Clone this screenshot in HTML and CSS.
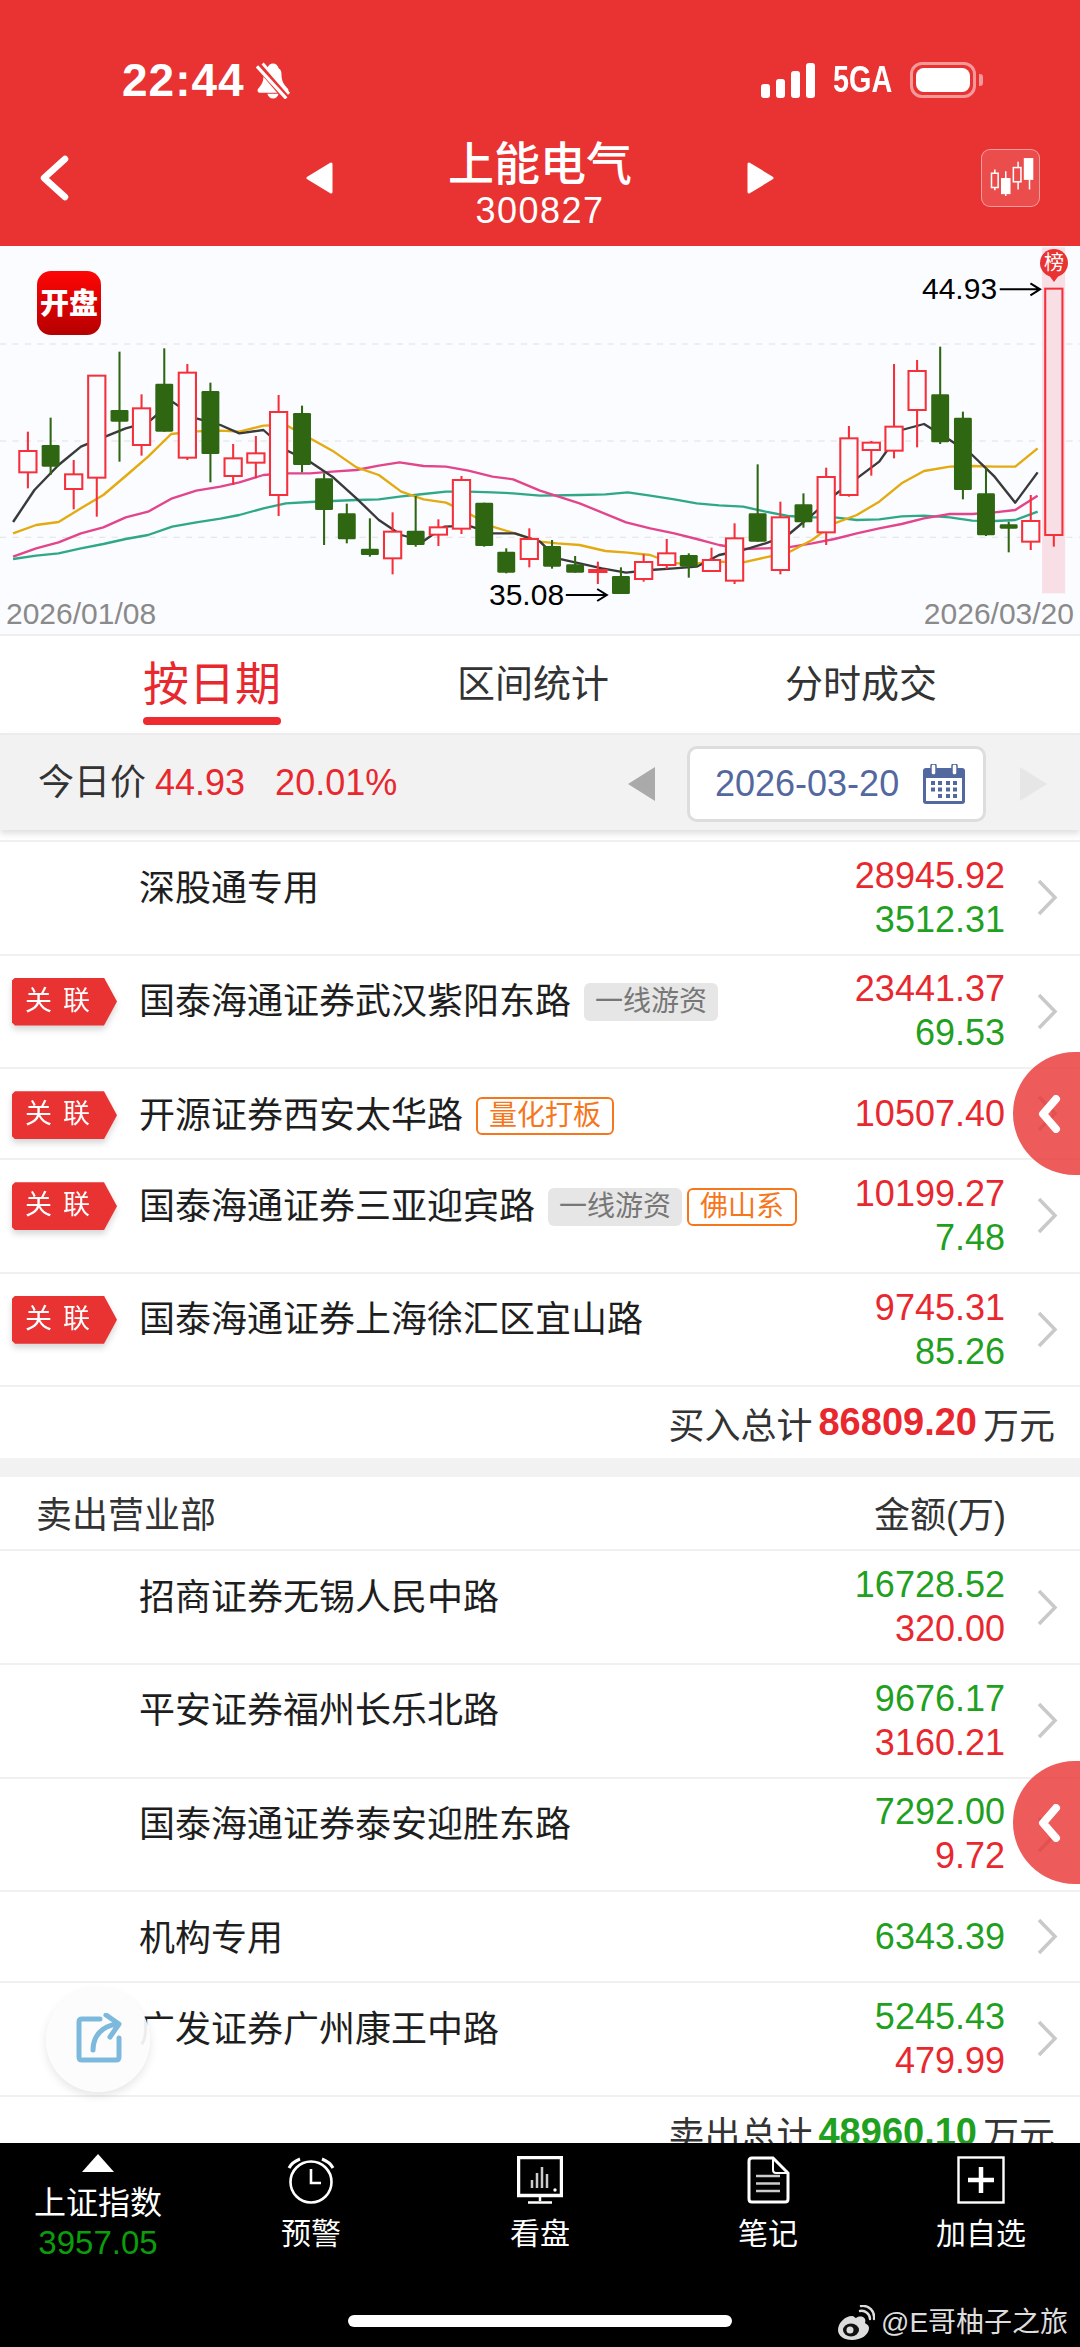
FILE: index.html
```html
<!DOCTYPE html>
<html lang="zh-CN">
<head>
<meta charset="utf-8">
<title>上能电气</title>
<link rel="stylesheet" href="styles.css">
</head>
<body>
<div class="page">
  <header class="header">
    <div class="status">
      <span class="time">22:44</span>
      <svg class="bell" viewBox="0 0 36 38"><path d="M18 1c3 0 5 2 6 5 2 1 3 3 3 7 0 7 3 11 7 15 1 2 0 4-2 4H4c-2 0-3-2-2-4 4-4 6-8 6-15 0-4 2-6 4-7 1-3 3-5 6-5z" fill="#fff"/><path d="M12 33h12c-1 3-3 5-6 5s-5-2-6-5z" fill="#fff"/><path d="M2 2l30 35" stroke="#e93232" stroke-width="8"/><path d="M1 4l31 34" stroke="#fff" stroke-width="3.4"/><path d="M7 1l28 32" stroke="#fff" stroke-width="3"/></svg>
      <span class="status-right">
        <span class="signal"><i class="s1"></i><i class="s2"></i><i class="s3"></i><i class="s4"></i></span>
        <span class="net">5GA</span>
        <span class="battery"><i></i></span>
        <span class="battery-tip"></span>
      </span>
    </div>
    <div class="titlebar">
      <svg class="back" viewBox="0 0 30 46"><path d="M26 4L5 23l21 19" fill="none" stroke="#fff" stroke-width="6.5" stroke-linecap="round" stroke-linejoin="round"/></svg>
      <svg class="tri" viewBox="0 0 28 32"><path d="M26 2v28L3 16z" fill="#fff" stroke="#fff" stroke-width="3" stroke-linejoin="round"/></svg>
      <div class="title-col">
        <div class="title">上能电气</div>
        <div class="code">300827</div>
      </div>
      <svg class="tri" viewBox="0 0 28 32"><path d="M2 2v28l23-14z" fill="#fff" stroke="#fff" stroke-width="3" stroke-linejoin="round"/></svg>
      <div class="kbtn">
        <svg viewBox="0 0 60 60" width="58" height="58"><g fill="none" stroke="#fff" stroke-width="1.6"><rect x="10" y="25" width="7" height="15"/><path d="M13.500 21v4M13.500 40v3M25 23v7M25 46v3M38 13v6M38 34v8M50 32v10"/><rect x="33" y="19" width="8" height="15"/></g><rect x="20" y="30" width="10" height="17" fill="#fff"/><rect x="44" y="9" width="10" height="23" fill="#fff"/></svg>
      </div>
    </div>
  </header>

  <section class="chart">
    <svg class="kline" viewBox="0 18 3136 1167" preserveAspectRatio="none">
      <g class="grid"><line x1="0" x2="3136" y1="312" y2="312"/><line x1="0" x2="3136" y1="603" y2="603"/><line x1="0" x2="3136" y1="892" y2="892"/></g>
      <rect class="band" x="3026" y="22" width="67" height="1038"/>
      <g class="ma">
        <polyline class="ma-teal" points="38,957 105,947 170,940 235,925 300,912 365,897 430,885 500,860 570,847 640,836 695,825 765,805 830,790 900,786 965,783 1035,780 1100,778 1160,770 1230,762 1295,755 1360,755 1430,757 1490,760 1568,767 1683,765 1758,763 1823,757 1888,767 1958,778 2023,790 2088,796 2158,800 2223,815 2288,828 2358,832 2423,832 2488,840 2553,838 2618,829 2683,827 2758,832 2823,842 2888,843 2948,840 3013,815"/>
        <polyline class="ma-pink" points="38,950 105,925 170,907 235,880 300,862 365,832 430,815 500,775 570,752 640,740 695,727 765,705 830,700 900,700 965,695 1035,690 1100,677 1160,667 1230,678 1295,680 1360,692 1430,710 1490,718 1568,752 1683,790 1818,847 1888,865 1958,880 2023,897 2088,915 2158,927 2223,925 2288,922 2358,910 2423,897 2488,880 2553,865 2618,852 2683,835 2758,822 2823,822 2888,817 2948,810 3013,767"/>
        <polyline class="ma-gold" points="38,880 105,855 170,846 235,805 300,765 365,708 430,650 497,582 570,574 640,572 695,575 765,557 830,555 900,595 965,632 1035,682 1100,705 1165,755 1230,778 1295,788 1360,820 1430,860 1495,880 1568,905 1618,910 1683,915 1758,933 1823,938 1888,945 1953,970 2023,970 2088,965 2158,967 2223,952 2288,938 2358,900 2423,850 2488,825 2553,785 2618,730 2683,693 2758,680 2823,678 2888,680 2948,680 3013,625"/>
        <polyline class="ma-black" points="38,846 100,750 170,675 235,620 300,592 365,565 430,547 500,485 570,535 640,555 695,580 765,570 830,630 900,665 965,710 1035,775 1100,840 1165,885 1230,903 1290,860 1360,857 1430,880 1495,880 1568,905 1618,955 1683,970 1748,985 1818,998 1888,990 1958,985 2023,980 2088,945 2158,930 2223,910 2288,885 2358,825 2423,765 2488,715 2553,665 2618,570 2683,552 2758,600 2823,645 2888,710 2948,788 3013,697"/>
      </g>
      <g class="up">
        <line x1="81" x2="81" y1="575" y2="745"/><rect x="56" y="633" width="50" height="64"/>
        <line x1="214" x2="214" y1="660" y2="808"/><rect x="189" y="703" width="50" height="44"/>
        <line x1="281" x2="281" y1="407" y2="830"/><rect x="256" y="407" width="50" height="306"/>
        <line x1="411" x2="411" y1="463" y2="647"/><rect x="386" y="505" width="50" height="110"/>
        <line x1="544" x2="544" y1="372" y2="660"/><rect x="519" y="398" width="50" height="255"/>
        <line x1="677" x2="677" y1="612" y2="735"/><rect x="652" y="655" width="50" height="53"/>
        <line x1="743" x2="743" y1="588" y2="715"/><rect x="718" y="640" width="50" height="28"/>
        <line x1="809" x2="809" y1="465" y2="828"/><rect x="784" y="516" width="50" height="249"/>
        <line x1="1140" x2="1140" y1="817" y2="1003"/><rect x="1115" y="875" width="50" height="80"/>
        <line x1="1273" x2="1273" y1="838" y2="918"/><rect x="1248" y="862" width="50" height="22"/>
        <line x1="1340" x2="1340" y1="708" y2="882"/><rect x="1315" y="720" width="50" height="146"/>
        <line x1="1537" x2="1537" y1="865" y2="982"/><rect x="1512" y="897" width="50" height="60"/>
        <line x1="1736" x2="1736" y1="965" y2="1032"/><rect class="flat" x="1711" y="990" width="50" height="6"/>
        <line x1="1869" x2="1869" y1="943" y2="1025"/><rect x="1844" y="966" width="50" height="51"/>
        <line x1="1936" x2="1936" y1="897" y2="987"/><rect x="1911" y="940" width="50" height="35"/>
        <line x1="2066" x2="2066" y1="923" y2="993"/><rect x="2041" y="960" width="50" height="33"/>
        <line x1="2133" x2="2133" y1="850" y2="1032"/><rect x="2108" y="895" width="50" height="127"/>
        <line x1="2266" x2="2266" y1="785" y2="1003"/><rect x="2241" y="832" width="50" height="158"/>
        <line x1="2399" x2="2399" y1="683" y2="915"/><rect x="2374" y="711" width="50" height="166"/>
        <line x1="2465" x2="2465" y1="558" y2="770"/><rect x="2440" y="595" width="50" height="170"/>
        <line x1="2530" x2="2530" y1="603" y2="707"/><rect x="2505" y="608" width="50" height="22"/>
        <line x1="2596" x2="2596" y1="372" y2="655"/><rect x="2571" y="560" width="50" height="72"/>
        <line x1="2663" x2="2663" y1="360" y2="622"/><rect x="2638" y="393" width="50" height="117"/>
        <line x1="2993" x2="2993" y1="765" y2="930"/><rect x="2968" y="843" width="50" height="62"/>
        <line x1="3060" x2="3060" y1="885" y2="920"/><rect class="limit" x="3035" y="146" width="50" height="739"/>
      </g>
      <g class="down">
        <line x1="147" x2="147" y1="533" y2="705"/><rect x="121" y="615" width="52" height="65"/>
        <line x1="347" x2="347" y1="335" y2="665"/><rect x="321" y="510" width="52" height="35"/>
        <line x1="477" x2="477" y1="325" y2="575"/><rect x="451" y="431" width="52" height="144"/>
        <line x1="611" x2="611" y1="428" y2="727"/><rect x="585" y="453" width="52" height="189"/>
        <line x1="877" x2="877" y1="497" y2="697"/><rect x="851" y="519" width="52" height="156"/>
        <line x1="941" x2="941" y1="700" y2="915"/><rect x="915" y="715" width="52" height="95"/>
        <line x1="1007" x2="1007" y1="791" y2="910"/><rect x="981" y="820" width="52" height="78"/>
        <line x1="1074" x2="1074" y1="835" y2="950"/><rect x="1048" y="926" width="52" height="19"/>
        <line x1="1207" x2="1207" y1="768" y2="920"/><rect x="1181" y="872" width="52" height="43"/>
        <line x1="1406" x2="1406" y1="788" y2="920"/><rect x="1380" y="788" width="52" height="130"/>
        <line x1="1470" x2="1470" y1="925" y2="1000"/><rect x="1444" y="935" width="52" height="63"/>
        <line x1="1603" x2="1603" y1="900" y2="986"/><rect x="1577" y="918" width="52" height="62"/>
        <line x1="1670" x2="1670" y1="948" y2="998"/><rect x="1644" y="973" width="52" height="25"/>
        <line x1="1803" x2="1803" y1="982" y2="1062"/><rect x="1777" y="1008" width="52" height="54"/>
        <line x1="2000" x2="2000" y1="940" y2="1013"/><rect x="1974" y="945" width="52" height="35"/>
        <line x1="2200" x2="2200" y1="673" y2="905"/><rect x="2174" y="820" width="52" height="85"/>
        <line x1="2333" x2="2333" y1="760" y2="863"/><rect x="2307" y="793" width="52" height="54"/>
        <line x1="2730" x2="2730" y1="320" y2="612"/><rect x="2704" y="463" width="52" height="144"/>
        <line x1="2796" x2="2796" y1="515" y2="778"/><rect x="2770" y="533" width="52" height="217"/>
        <line x1="2863" x2="2863" y1="685" y2="888"/><rect x="2837" y="760" width="52" height="126"/>
        <line x1="2929" x2="2929" y1="845" y2="937"/><rect x="2903" y="853" width="52" height="13"/>
      </g>
      <g class="arrow">
        <path d="M2903 148H3018M2992 130L3020 148L2992 166"/>
        <path d="M1643 1065H1760M1734 1047L1762 1065L1734 1083"/>
      </g>
    </svg>
    <div class="logo">开盘</div>
    <div class="pin">榜</div>
    <span class="price-label high">44.93</span>
    <span class="price-label low">35.08</span>
    <span class="axis-date start">2026/01/08</span>
    <span class="axis-date end">2026/03/20</span>
  </section>

  <nav class="tabs">
    <div class="tab active">按日期</div>
    <div class="tab">区间统计</div>
    <div class="tab">分时成交</div>
  </nav>

  <div class="datebar">
    <span class="today">今日价</span>
    <span class="red today-price">44.93</span>
    <span class="red today-pct">20.01%</span>
    <span class="arrow-l"></span>
    <div class="datebox">
      <span>2026-03-20</span>
      <svg class="cal" viewBox="0 0 42 40"><rect x="0" y="4" width="42" height="36" rx="3" fill="#5468a0"/><rect x="3" y="14" width="36" height="23" fill="#fff"/><g fill="#fff"><rect x="8" y="0" width="5" height="11" rx="2" stroke="#5468a0" stroke-width="1.500"/><rect x="29" y="0" width="5" height="11" rx="2" stroke="#5468a0" stroke-width="1.500"/></g><g fill="#5468a0"><rect x="8" y="17" width="4" height="4"/><rect x="15" y="17" width="4" height="4"/><rect x="23" y="17" width="4" height="4"/><rect x="30" y="17" width="4" height="4"/><rect x="8" y="23.500" width="4" height="4"/><rect x="15" y="23.500" width="4" height="4"/><rect x="23" y="23.500" width="4" height="4"/><rect x="30" y="23.500" width="4" height="4"/><rect x="15" y="30" width="4" height="4"/><rect x="23" y="30" width="4" height="4"/><rect x="30" y="30" width="4" height="4"/></g></svg>
    </div>
    <span class="arrow-r"></span>
  </div>

  <main class="list">
    <div class="row">
      <div class="slot"></div>
      <div class="name">深股通专用</div>
      <div class="vals"><span class="red">28945.92</span><span class="green">3512.31</span></div>
      <svg class="chev" viewBox="0 0 22 37"><path d="M3 2l16 16.500L3 35"/></svg>
    </div>
    <div class="row">
      <div class="slot"><span class="rel">关联</span></div>
      <div class="name">国泰海通证券武汉紫阳东路<span class="tag gray">一线游资</span></div>
      <div class="vals"><span class="red">23441.37</span><span class="green">69.53</span></div>
      <svg class="chev" viewBox="0 0 22 37"><path d="M3 2l16 16.500L3 35"/></svg>
    </div>
    <div class="row">
      <div class="slot"><span class="rel">关联</span></div>
      <div class="name">开源证券西安太华路<span class="tag orange">量化打板</span></div>
      <div class="vals"><span class="red">10507.40</span></div>
      <svg class="chev" viewBox="0 0 22 37"><path d="M3 2l16 16.500L3 35"/></svg>
    </div>
    <div class="row">
      <div class="slot"><span class="rel">关联</span></div>
      <div class="name">国泰海通证券三亚迎宾路<span class="tag gray">一线游资</span><span class="tag orange">佛山系</span></div>
      <div class="vals"><span class="red">10199.27</span><span class="green">7.48</span></div>
      <svg class="chev" viewBox="0 0 22 37"><path d="M3 2l16 16.500L3 35"/></svg>
    </div>
    <div class="row">
      <div class="slot"><span class="rel">关联</span></div>
      <div class="name">国泰海通证券上海徐汇区宜山路</div>
      <div class="vals"><span class="red">9745.31</span><span class="green">85.26</span></div>
      <svg class="chev" viewBox="0 0 22 37"><path d="M3 2l16 16.500L3 35"/></svg>
    </div>
    <div class="total"><span>买入总计</span><b class="red">86809.20</b><span>万元</span></div>
    <div class="sep"></div>
    <div class="head"><span>卖出营业部</span><span>金额(万)</span></div>
    <div class="row">
      <div class="slot"></div>
      <div class="name">招商证券无锡人民中路</div>
      <div class="vals"><span class="green">16728.52</span><span class="red">320.00</span></div>
      <svg class="chev" viewBox="0 0 22 37"><path d="M3 2l16 16.500L3 35"/></svg>
    </div>
    <div class="row">
      <div class="slot"></div>
      <div class="name">平安证券福州长乐北路</div>
      <div class="vals"><span class="green">9676.17</span><span class="red">3160.21</span></div>
      <svg class="chev" viewBox="0 0 22 37"><path d="M3 2l16 16.500L3 35"/></svg>
    </div>
    <div class="row">
      <div class="slot"></div>
      <div class="name">国泰海通证券泰安迎胜东路</div>
      <div class="vals"><span class="green">7292.00</span><span class="red">9.72</span></div>
      <svg class="chev" viewBox="0 0 22 37"><path d="M3 2l16 16.500L3 35"/></svg>
    </div>
    <div class="row">
      <div class="slot"></div>
      <div class="name">机构专用</div>
      <div class="vals"><span class="green">6343.39</span></div>
      <svg class="chev" viewBox="0 0 22 37"><path d="M3 2l16 16.500L3 35"/></svg>
    </div>
    <div class="row">
      <div class="slot"></div>
      <div class="name">广发证券广州康王中路</div>
      <div class="vals"><span class="green">5245.43</span><span class="red">479.99</span></div>
      <svg class="chev" viewBox="0 0 22 37"><path d="M3 2l16 16.500L3 35"/></svg>
    </div>
    <div class="total"><span>卖出总计</span><b class="green">48960.10</b><span>万元</span></div>
  </main>

  <footer class="bottom">
    <div class="index">
      <svg class="up-tri" viewBox="0 0 32 18"><path d="M16 0l16 18H0z" fill="#fff"/></svg>
      <div class="index-name">上证指数</div>
      <div class="index-val">3957.05</div>
    </div>
    <div class="item">
      <svg viewBox="0 0 50 48" width="50" height="48"><circle cx="25" cy="26" r="20.500" fill="none" stroke="#fff" stroke-width="2.600"/><path d="M25 13v14h10" fill="none" stroke="#fff" stroke-width="2.600"/><path d="M3 12c2-4 6-7 11-9M47 12c-2-4-6-7-11-9" fill="none" stroke="#fff" stroke-width="3"/></svg>
      <span>预警</span>
    </div>
    <div class="item">
      <svg viewBox="0 0 46 48" width="46" height="48"><rect x="1.500" y="1.500" width="43" height="38" fill="none" stroke="#fff" stroke-width="3.500"/><path d="M15 32V24M20 32V17M25 32V11M30 32V18" stroke="#ccc" stroke-width="2.500"/><circle cx="38" cy="34" r="1.700" fill="#fff"/><path d="M23 40v5M11 46.500h24" stroke="#fff" stroke-width="2.500"/></svg>
      <span>看盘</span>
    </div>
    <div class="item">
      <svg viewBox="0 0 44 48" width="44" height="48"><path d="M6 2h21l15 15v26c0 2-1 3-3 3H6c-2 0-3-1-3-3V5c0-2 1-3 3-3z" fill="none" stroke="#fff" stroke-width="3"/><path d="M27 3v11c0 2 1 3 3 3h11" fill="none" stroke="#fff" stroke-width="2"/><path d="M10 20h24M10 27.500h24M10 35h24" stroke="#ccc" stroke-width="2.500"/></svg>
      <span>笔记</span>
    </div>
    <div class="item">
      <svg viewBox="0 0 48 48" width="48" height="48"><rect x="1.500" y="1.500" width="45" height="45" fill="none" stroke="#fff" stroke-width="2.400"/><path d="M24 11v26M11 24h26" stroke="#fff" stroke-width="4.500"/></svg>
      <span>加自选</span>
    </div>
    <div class="home"></div>
    <div class="mark">
      <svg viewBox="0 0 38 36" width="38" height="36"><path d="M15 11C8 11 1 18 1 25c0 6 6 10 14 10 9 0 17-5 17-12 0-3-3-4-4-5 1-3 0-5-2-6-3-1-6 0-7 1-1 0-2-2-4-2z" fill="#ddd"/><ellipse cx="14" cy="25" rx="8" ry="6.500" fill="#111"/><circle cx="13" cy="25" r="3.500" fill="#ddd"/><path d="M23 6c5-1 10 3 10 8M24 1c8-1 14 5 13 13" fill="none" stroke="#ddd" stroke-width="2.400" stroke-linecap="round"/></svg>
      <span>@E哥柚子之旅</span>
    </div>
  </footer>

  <div class="fold fold-a"><svg viewBox="0 0 24 38" width="24" height="38"><path d="M19 4L6 19l13 15" fill="none" stroke="#fff" stroke-width="8" stroke-linecap="round" stroke-linejoin="round"/></svg></div>
  <div class="fold fold-b"><svg viewBox="0 0 24 38" width="24" height="38"><path d="M19 4L6 19l13 15" fill="none" stroke="#fff" stroke-width="8" stroke-linecap="round" stroke-linejoin="round"/></svg></div>
  <div class="share"><svg viewBox="0 0 48 50" width="48" height="50"><path d="M24 6H6c-2 0-3 1-3 3v35c0 2 1 3 3 3h34c2 0 3-1 3-3V25" fill="none" stroke="#7cb9dd" stroke-width="5" stroke-linecap="round"/><path d="M17 37c0-14 9-24 24-26M30 2l13 9-9 13" fill="none" stroke="#7cb9dd" stroke-width="5" stroke-linecap="round" stroke-linejoin="round"/></svg></div>
</div>
</body>
</html>
```
FILE: styles.css
```css
* { box-sizing: border-box; }
html, body { margin: 0; padding: 0; }
body { background: #fff; font-family: "Liberation Sans", "Noto Sans CJK SC", sans-serif; color: #2a2a2a; }
.page { position: relative; width: 1080px; height: 2347px; overflow: hidden; display: flex; flex-direction: column; }
.red { color: #e8282e; }
.green { color: #1fa01f; }

/* header */
.header { height: 246px; flex: none; background: #e93232; color: #fff; padding-top: 62px; }
.status { display: flex; align-items: center; height: 36px; padding-left: 122px; padding-right: 97px; }
.time { font-size: 46px; font-weight: 700; line-height: 36px; letter-spacing: 1px; }
.bell { width: 34px; height: 37px; margin-left: 11px; }
.status-right { margin-left: auto; display: flex; align-items: center; height: 36px; }
.signal { display: flex; align-items: flex-end; gap: 6px; height: 35px; }
.signal i { display: block; width: 9px; background: #fff; border-radius: 3px; }
.s1 { height: 14px; }
.s2 { height: 19px; }
.s3 { height: 27px; }
.s4 { height: 35px; }
.net { font-size: 36px; font-weight: 700; line-height: 36px; width: 59px; margin-left: 18px; transform: scaleX(.8); transform-origin: left center; white-space: nowrap; }
.battery { width: 66px; height: 36px; margin-left: 18px; border: 3px solid rgba(255,255,255,.5); border-radius: 12px; padding: 3px; }
.battery i { display: block; height: 100%; background: #fff; border-radius: 8px; }
.battery-tip { width: 4px; height: 12px; margin-left: 3px; background: rgba(255,255,255,.5); border-radius: 0 3px 3px 0; }
.titlebar { display: flex; align-items: center; height: 80px; margin-top: 40px; padding-right: 40px; }
.back { width: 30px; height: 46px; margin-left: 39px; flex: none; }
.tri { width: 28px; height: 32px; flex: none; }
.back + .tri { margin-left: 236px; }
.title-col { flex: 1; align-self: flex-start; padding-top: 1px; text-align: center; }
.title { font-size: 46px; line-height: 50px; font-weight: 500; }
.code { font-size: 36px; line-height: 44px; letter-spacing: 1.500px; }
.kbtn { width: 59px; height: 58px; flex: none; margin-left: 206px; background: rgba(255,255,255,.13); border: 1.500px solid rgba(255,255,255,.45); border-radius: 9px; display: flex; align-items: center; justify-content: center; }

/* chart */
.chart { position: relative; height: 390px; flex: none; background: #fbfcff; border-bottom: 2px solid #eeeeee; }
.kline { display: block; width: 1080px; height: 389px; }
.grid line { stroke: #dfdfdf; stroke-width: 3; stroke-dasharray: 18 18; }
.band { fill: #f8dfe5; }
.ma polyline { fill: none; stroke-width: 7; stroke-linejoin: round; }
.ma-black { stroke: #3a3a3a; }
.ma-gold { stroke: #e3ab10; }
.ma-pink { stroke: #e2458c; }
.ma-teal { stroke: #2fa888; }
.up line, .up rect { stroke: #f5303a; stroke-width: 6; }
.up rect { fill: #fbfcff; }
.up rect.flat { fill: #f5303a; }
.up rect.limit { fill: #f8dfe5; }
.down line { stroke: #2f6611; stroke-width: 6; }
.down rect { fill: #2f6611; rx: 4px; }
.arrow path { fill: none; stroke: #000; stroke-width: 6; }
.logo { position: absolute; left: 37px; top: 25px; width: 64px; height: 64px; border-radius: 14px; background: linear-gradient(#ff0606, #b50000); color: #fff; font-size: 29px; line-height: 66px; font-weight: 900; text-align: center; white-space: nowrap; }
.pin { position: absolute; left: 1040px; top: 3px; width: 28px; height: 28px; border-radius: 50%; background: #e93232; color: #fff; font-size: 20px; line-height: 28px; text-align: center; }
.pin::after { content: ""; position: absolute; left: 8px; top: 25px; border: 6px solid transparent; border-top: 8px solid #e93232; border-bottom: 0; }
.price-label { position: absolute; font-size: 30px; line-height: 36px; color: #000; }
.price-label.high { left: 922px; top: 25px; }
.price-label.low { left: 489px; top: 331px; }
.axis-date { position: absolute; top: 350px; font-size: 30px; line-height: 36px; color: #8a8a8a; }
.axis-date.start { left: 6px; }
.axis-date.end { right: 6px; }

/* tabs */
.tabs { height: 97px; flex: none; display: flex; gap: 176px; padding-left: 143px; background: #fff; }
.tab { padding-top: 16px; font-size: 38px; line-height: 64px; color: #333; }
.tab.active { font-size: 46px; color: #e8282e; }
.tab.active::after { content: ""; display: block; height: 8px; margin-top: 1px; border-radius: 4px; background: #ee2b2f; }

/* date bar */
.datebar { position: relative; z-index: 1; height: 97px; flex: none; display: flex; align-items: center; padding: 3px 33px 0 38px; background: #f2f2f2; border-top: 2px solid #ececec; box-shadow: 0 4px 6px rgba(0,0,0,.12); font-size: 36px; line-height: 44px; }
.today { color: #333; margin-bottom: 3px; }
.today-price { margin-left: 9px; margin-bottom: 2px; }
.today-pct { margin-left: 30px; margin-bottom: 2px; }
.arrow-l { margin-left: auto; width: 0; height: 0; border: 17px solid transparent; border-left: 0; border-right: 27px solid #aaaaaa; }
.arrow-r { width: 0; height: 0; border: 17px solid transparent; border-right: 0; border-left: 27px solid #e6e6e6; margin-left: 34px; }
.datebox { width: 299px; height: 76px; margin-left: 32px; padding: 0 18px 0 25px; display: flex; align-items: center; justify-content: space-between; background: #fff; border: 3px solid #dddddd; border-radius: 10px; color: #5468a0; }
.cal { width: 42px; height: 40px; }

/* list */
.list { flex: 1; min-height: 0; overflow: hidden; margin-top: 10px; background: #fff; }
.row { display: flex; align-items: stretch; min-height: 91px; padding-right: 22px; border-top: 2px solid #f0f0f0; }
.slot { width: 139px; flex: none; padding: 22px 0 0 12px; filter: drop-shadow(0 4px 3px rgba(0,0,0,.16)); }
.rel { display: block; width: 105px; height: 48px; padding-left: 13px; background: #e93232; color: #fff; font-size: 27px; line-height: 47px; letter-spacing: 11px; white-space: nowrap; clip-path: polygon(3px 0, 92px 0, 105px 24px, 92px 48px, 3px 48px, 0 45px, 0 3px); }
.name { flex: 1; display: flex; align-items: center; height: 89px; padding-top: 4px; font-size: 36px; line-height: 40px; color: #1e1e1e; white-space: nowrap; }
.tag { display: block; height: 38px; margin-left: 13px; padding: 0 11px; border-radius: 6px; font-size: 28px; line-height: 38px; }
.tag + .tag { margin-left: 5px; }
.tag.gray { background: #e6e6e6; color: #777; }
.tag.orange { border: 2px solid #f6761c; color: #f6761c; line-height: 34px; }
.vals { display: flex; flex-direction: column; justify-content: center; align-items: flex-end; padding: 11.800px 0; font-size: 36px; line-height: 44px; }
.chev { width: 22px; height: 37px; margin-left: 31px; flex: none; align-self: center; }
.chev path { fill: none; stroke: #c9c9c9; stroke-width: 3.500px; }
.total { display: flex; justify-content: flex-end; align-items: center; gap: 6px; height: 73px; padding-right: 25px; border-top: 2px solid #f0f0f0; font-size: 36px; color: #333; }
.total b { font-size: 38px; }
.sep { height: 19px; background: #f2f2f2; }
.head { display: flex; justify-content: space-between; align-items: center; height: 72px; padding: 0 74px 3px 36px; font-size: 36px; color: #333; }

/* bottom nav */
.bottom { position: relative; height: 204px; flex: none; background: #000; color: #fff; display: grid; grid-template-columns: 196px 230px 228px 228px 198px; align-items: start; }
.index { display: flex; flex-direction: column; align-items: center; padding-top: 11px; }
.up-tri { width: 32px; height: 18px; }
.index-name { margin-top: 9px; font-size: 32px; line-height: 44px; }
.index-val { font-size: 33px; line-height: 36px; color: #0c9c0c; }
.item { display: flex; flex-direction: column; align-items: center; padding-top: 13px; font-size: 30px; line-height: 44px; }
.item span { margin-top: 8px; }
.home { position: absolute; left: 348px; top: 172px; width: 384px; height: 12px; border-radius: 6px; background: #fff; }
.mark { position: absolute; left: 837px; top: 160px; display: flex; align-items: center; gap: 6px; font-size: 28px; line-height: 40px; color: #dddddd; white-space: nowrap; }

/* floating controls */
.fold { position: absolute; left: 1013px; width: 67px; height: 123px; background: rgba(233,50,50,.8); border-radius: 62px 0 0 62px / 62px 0 0 62px; display: flex; align-items: center; padding-left: 24px; }
.fold-a { top: 1052px; }
.fold-b { top: 1761px; }
.share { position: absolute; left: 46px; top: 1988px; width: 104px; height: 104px; padding: 0 0 4px 4px; border-radius: 50%; background: rgba(252,252,252,.93); box-shadow: 0 4px 10px rgba(0,0,0,.1); display: flex; align-items: center; justify-content: center; }
```
